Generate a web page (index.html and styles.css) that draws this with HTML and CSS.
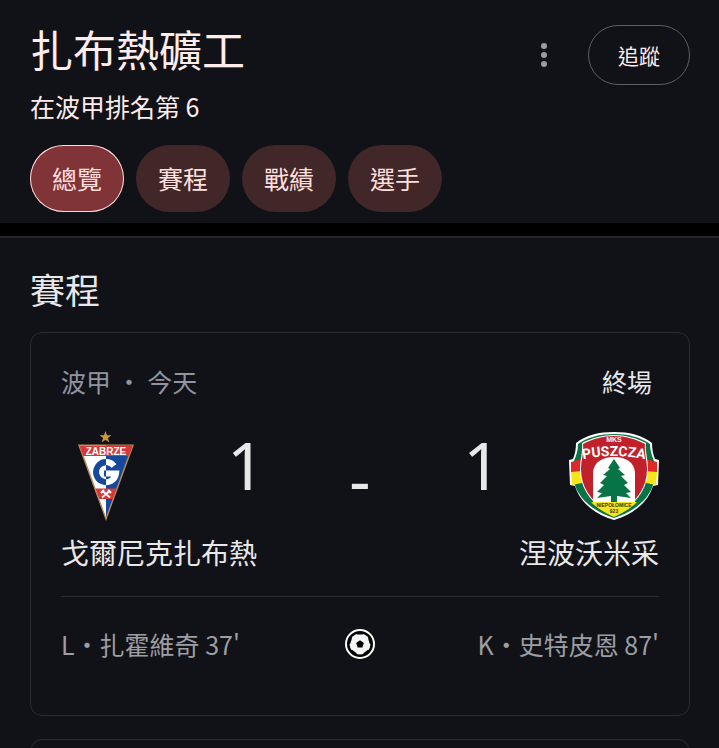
FILE: index.html
```html
<!DOCTYPE html>
<html lang="zh-Hant">
<head>
    <meta charset="UTF-8">
    <meta name="viewport" content="width=device-width, initial-scale=1.0">
    <title>扎布熱礦工</title>
    <link rel="stylesheet" href="styles.css">
</head>
<body>
    <header class="header">
        <div class="header-top">
            <h1 class="team-title">扎布熱礦工</h1>
            <button type="button" class="more-button" aria-label="更多">
                <svg width="8" height="26" viewBox="0 0 8 26" fill="#9b9da3">
                    <circle cx="4" cy="4" r="3"/>
                    <circle cx="4" cy="13" r="3"/>
                    <circle cx="4" cy="22" r="3"/>
                </svg>
            </button>
            <button type="button" class="follow-button">追蹤</button>
        </div>
        <p class="ranking">在波甲排名第 6</p>
        <nav class="tabs">
            <a href="#overview" class="tab active">總覽</a>
            <a href="#matches" class="tab">賽程</a>
            <a href="#standings" class="tab">戰績</a>
            <a href="#players" class="tab">選手</a>
        </nav>
    </header>

    <main class="matches" id="matches">
        <h2 class="section-title">賽程</h2>

        <article class="card">
            <div class="match-info">
                <span class="league">波甲 ・ 今天</span>
                <span class="status">終場</span>
            </div>

            <div class="match-row">
                <svg class="crest" viewBox="0 0 90 90" role="img" aria-label="Górnik Zabrze">
                    <defs>
                        <clipPath id="left-half"><path d="M0 0h45v90H0z"/></clipPath>
                        <clipPath id="right-half"><path d="M45 0h45v90H45z"/></clipPath>
                    </defs>
                    <path d="M44.500 0l1.500 4.300h4.500l-3.600 2.700 1.400 4.400-3.800-2.600-3.800 2.600L42.100 7l-3.600-2.700H43z" fill="#c99a35"/>
                    <path d="M17 13.500h56L45 90z" fill="#b98c55"/>
                    <path d="M19 14.500h26V86z" fill="#fff"/>
                    <path d="M45 14.500h26L45 86z" fill="#17499b"/>
                    <path d="M18.500 14.500h53L67.800 25H22.300z" fill="#d8373a"/>
                    <path d="M34.500 57.500h21L51.700 68h-13.400z" fill="#d8373a"/>
                    <text class="crest-zabrze" x="45" y="23.500">ZABRZE</text>
                    <g fill="none" stroke-width="6">
                        <path d="M53 35a10 10 0 1 0 2 7.500H43" stroke="#17499b" clip-path="url(#left-half)"/>
                        <path d="M53 35a10 10 0 1 0 2 7.500H43" stroke="#fff" clip-path="url(#right-half)"/>
                    </g>
                    <path d="M41 59.500l8 7M49 59.500l-8 7" stroke="#fff" stroke-width="1.700"/>
                    <path d="M40 62l3-3M47 59l3 3" stroke="#fff" stroke-width="2.200"/>
                </svg>
                <div class="scores">
                    <span class="score">1</span>
                    <span class="score dash">-</span>
                    <span class="score">1</span>
                </div>
                <svg class="crest" viewBox="0 0 90 90" role="img" aria-label="Puszcza Niepołomice">
                    <defs>
                        <path id="arc" d="M11 29Q45 21 79 29"/>
                    </defs>
                    <path d="M45 1C60 1 73 4 83 12c0 6 1 11 3 16l4 1-1 25-5 1C79 71 65 83 45 89 25 83 11 71 6 55l-5-1L0 29l4-1c2-5 3-10 3-16C17 4 30 1 45 1z" fill="#fff"/>
                    <path d="M45 3c14 0 26 3 36 10 0 7 2 12 4 17v20C82 67 65 81 45 87 25 81 8 67 5 50V30c2-5 4-10 4-17C19 6 31 3 45 3z" fill="#087344"/>
                    <path d="M2 31l11-3v13l-11 1zM88 31l-11-3v13l11 1z" fill="#dd2927"/>
                    <path d="M2 41l11-1v12l-10 2zM88 41l-11-1v12l10 2z" fill="#f5e51b"/>
                    <path d="M45 4c11 0 23 3 32 8-1 9 2 16 2 26 0 22-14 37-34 47-20-10-34-25-34-47 0-10 3-17 2-26C22 7 34 4 45 4z" fill="#fff"/>
                    <path d="M45 5c11 0 22 3 31 8-1 9 2 16 2 25 0 21-13 36-33 45-20-9-33-24-33-45 0-9 3-16 2-25C23 8 34 5 45 5z" fill="#c0212b"/>
                    <path d="M24 72V43c0-12 10-17 21-17s21 5 21 17v29L45 80z" fill="#fff"/>
                    <path d="M22 71h46c-6 6-14 11-23 15-9-4-17-9-23-15z" fill="#f5e51b"/>
                    <path d="M45 28l6 9-2 1 7 6-4 1 7 7-4 2 7 7-5 1 5 5-14-2v6h-6v-6l-14 2 5-5-5-1 7-7-4-2 7-7-4-1 7-6-2-1z" fill="#087344"/>
                    <text class="crest-mks" x="45" y="11">MKS</text>
                    <text class="crest-puszcza"><textPath href="#arc" startOffset="50%">PUSZCZA</textPath></text>
                    <text class="crest-town" x="45" y="76">NIEPOŁOMICE</text>
                    <text class="crest-town" x="45" y="82">923</text>
                </svg>
            </div>

            <div class="team-names">
                <span>戈爾尼克扎布熱</span>
                <span>涅波沃米采</span>
            </div>

            <div class="goals">
                <span class="scorer">L・扎霍維奇 37'</span>
                <svg class="ball" viewBox="0 0 30 30" role="img" aria-label="進球">
                    <circle cx="15" cy="15" r="14" fill="#000" stroke="#fff" stroke-width="2"/>
                    <circle cx="15" cy="15" r="10.500" fill="#f4f4f4"/>
                    <g fill="#000">
                        <path id="patch" d="M10.500 3h9l-1.800 2.600H12.300z"/>
                        <use href="#patch" transform="rotate(72 15 15)"/>
                        <use href="#patch" transform="rotate(144 15 15)"/>
                        <use href="#patch" transform="rotate(216 15 15)"/>
                        <use href="#patch" transform="rotate(288 15 15)"/>
                        <path d="M15 11.200l3.800 2.800-1.400 4.400h-4.800L11.200 14z"/>
                    </g>
                </svg>
                <span class="scorer right">K・史特皮恩 87'</span>
            </div>
        </article>

        <article class="card next-card"></article>
    </main>
</body>
</html>
```
FILE: styles.css
```css
* {
    margin: 0;
    padding: 0;
    box-sizing: border-box;
}

body {
    font-family: "Noto Sans CJK TC", sans-serif;
    font-size: 25px;
    line-height: 36px;
    color: #e8e8ea;
    background-color: #111217;
}

button {
    font-family: inherit;
    color: inherit;
    background: none;
    border: none;
    cursor: pointer;
}

.header {
    padding: 25px 29px 11px 30px;
    border-bottom: 13px solid #000;
    color: #ffeceb;
}

.header-top {
    display: flex;
    align-items: flex-start;
}

.team-title {
    flex: 1;
    font-size: 43px;
    font-weight: 400;
    line-height: 46px;
}

.more-button {
    display: flex;
    align-items: center;
    justify-content: center;
    width: 48px;
    height: 60px;
    margin-right: 20px;
}

.follow-button {
    height: 60px;
    padding: 0 29px;
    border: 1px solid #5c5e64;
    border-radius: 30px;
    font-size: 21px;
}

.ranking {
    margin: 3px 0 21px;
}

.tabs {
    display: flex;
    gap: 12px;
}

.tab {
    padding: 15px 22px 16px;
    border-radius: 34px;
    background-color: #412727;
    color: #ffdfdd;
    text-decoration: none;
}

.tab.active {
    background-color: #803437;
    box-shadow: inset 0 0 0 1px #ffdfdd;
}

.matches {
    padding: 29px 29px 0 30px;
    border-top: 2px solid #25262b;
}

.section-title {
    margin-bottom: 21px;
    font-size: 35px;
    font-weight: 400;
    line-height: 44px;
}

.card {
    margin-bottom: 23px;
    padding: 30px;
    border: 1px solid #2b2c31;
    border-radius: 12px;
}

.match-info {
    display: flex;
    justify-content: space-between;
    padding-right: 7px;
}

.league {
    color: #9293a0;
}

.match-row {
    display: flex;
    margin-top: 32px;
}

.crest {
    flex: none;
    width: 90px;
    height: 90px;
}

.crest text {
    font-family: "Liberation Sans", sans-serif;
    font-weight: bold;
    text-anchor: middle;
}

.crest .crest-zabrze {
    font-size: 10px;
    fill: #fff;
}

.crest .crest-mks {
    font-size: 7px;
    fill: #fff;
}

.crest .crest-puszcza {
    font-family: Roboto, sans-serif;
    font-size: 14px;
    fill: #fff;
}

.crest .crest-town {
    font-size: 5px;
    fill: #373717;
}

.scores {
    display: flex;
    flex: 1;
    justify-content: space-between;
    padding: 0 68px 0 76px;
}

.score {
    font-family: "Noto Sans", sans-serif;
    font-size: 66px;
    line-height: 66px;
}

.dash {
    padding: 14px 8px 0 0;
}

.team-names {
    display: flex;
    justify-content: space-between;
    padding: 11px 0 24px;
    border-bottom: 1px solid #2b2c31;
    font-size: 28px;
    line-height: 40px;
}

.goals {
    display: flex;
    align-items: center;
    padding: 29px 0 23px;
    color: #9d9ea3;
}

.scorer {
    flex: 1;
}

.scorer.right {
    text-align: right;
}

.ball {
    width: 30px;
    height: 30px;
}

.next-card {
    min-height: 384px;
}
```
